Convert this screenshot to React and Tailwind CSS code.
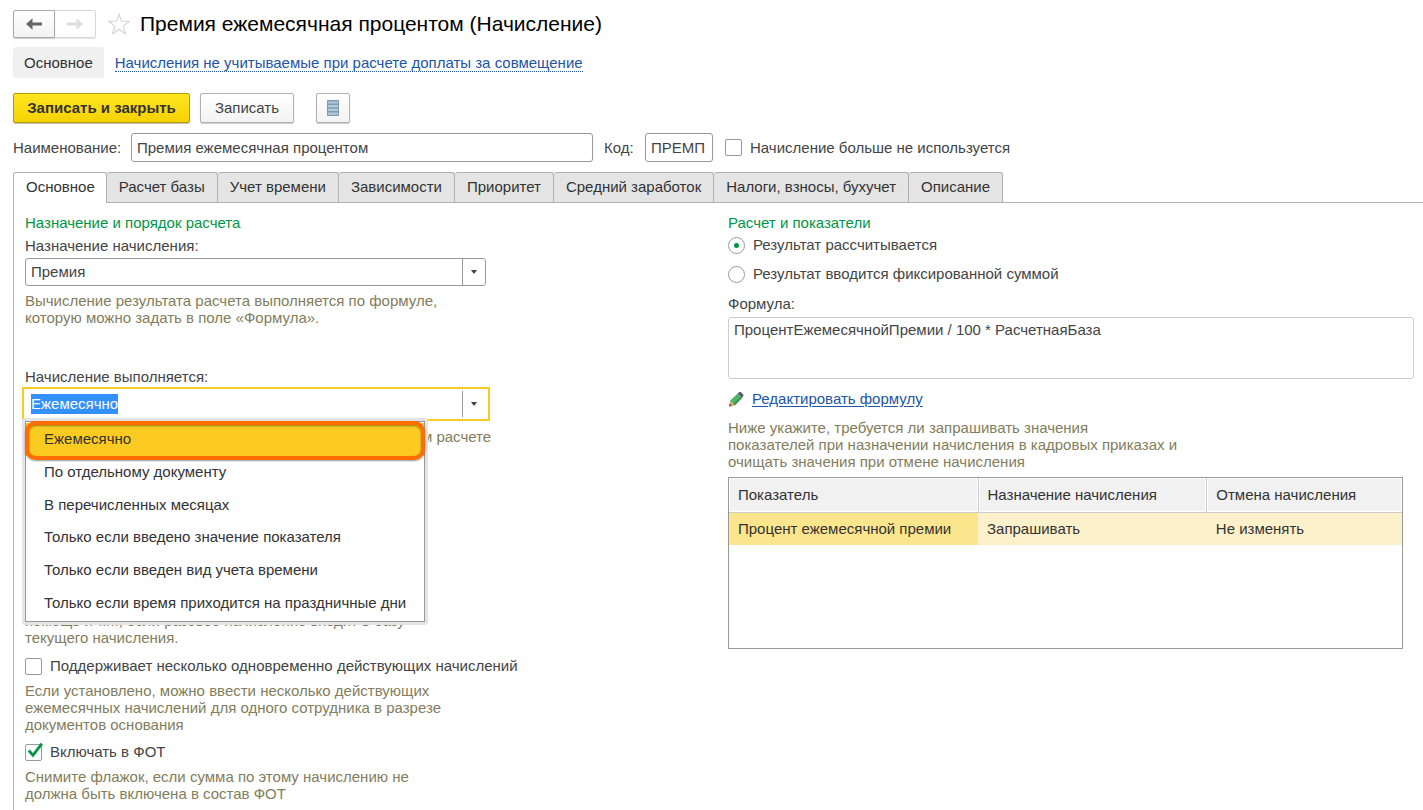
import { useEffect, useRef } from "react";

const TABS = [
  "Основное",
  "Расчет базы",
  "Учет времени",
  "Зависимости",
  "Приоритет",
  "Средний заработок",
  "Налоги, взносы, бухучет",
  "Описание",
];

const PERIODS = [
  "Ежемесячно",
  "По отдельному документу",
  "В перечисленных месяцах",
  "Только если введено значение показателя",
  "Только если введен вид учета времени",
  "Только если время приходится на праздничные дни",
];

function Caret() {
  return (
    <svg viewBox="0 0 6 4" className="h-1 w-1.5" aria-hidden="true">
      <path d="M0 0h6L3.5 3.5h-1z" fill="#444" />
    </svg>
  );
}

function Arrow({ flip }) {
  return (
    <svg viewBox="0 0 16 12" className={flip ? "h-3 w-4 -scale-x-100" : "h-3 w-4"} aria-hidden="true">
      <path d="M0 6 6.500 0.300V4.500H16V7.500H6.500V11.700Z" fill="currentColor" />
    </svg>
  );
}

function Star() {
  return (
    <svg viewBox="0 0 22 22" className="h-[22px] w-[22px]" aria-hidden="true">
      <path
        d="M11 1.200 13.500 8.200 21.400 8.500 15.200 13.200 17.400 20.800 11 16.400 4.600 20.800 6.800 13.200 .600 8.500 8.500 8.200Z"
        fill="#fff"
        stroke="#d9d9d9"
        strokeWidth="1.300"
      />
    </svg>
  );
}

function ListIcon() {
  return (
    <svg viewBox="0 0 12 16" className="h-4 w-3" aria-hidden="true">
      <rect x="0" y="0" width="12" height="16" rx="1" fill="#7d9bb3" />
      <path d="M1 2.500h10M1 6.200h10M1 9.900h10M1 13.600h10" stroke="#b3cadb" strokeWidth="2.200" />
    </svg>
  );
}

function Pencil() {
  return (
    <svg viewBox="0 0 16 16" className="h-4 w-4" aria-hidden="true">
      <path d="M1 15.500 2 9.800 6.800 14.200Z" fill="#e0a256" />
      <path d="M1 15.500 1.500 12.600 4 14.900Z" fill="#6b5a48" />
      <path d="M2 9.800 9.600 2.600 14 7 6.800 14.200Z" fill="#4fb563" />
      <path d="M5.600 13.100 12.800 5.800 14 7 6.800 14.200Z" fill="#35914a" />
      <path d="M9.600 2.600 11.400 1Q12.200 .500 13 1.200L15.200 3.400Q15.800 4.200 15.200 5L14 7Z" fill="#4f5d73" />
    </svg>
  );
}

function Check({ id, label, checked }) {
  return (
    <div className="flex h-5 items-center gap-2">
      <span className="relative flex">
        <input
          id={id}
          type="checkbox"
          defaultChecked={checked}
          className="peer h-[17px] w-[17px] appearance-none rounded-[2px] border border-[#999] bg-white"
        />
        <svg
          viewBox="0 0 17 17"
          className="pointer-events-none absolute inset-0 hidden h-[17px] w-[17px] overflow-visible peer-checked:block"
          aria-hidden="true"
        >
          <path d="M3.800 6.500 8 11.300 16.800 -.300" fill="none" stroke="#009646" strokeWidth="2.800" />
        </svg>
      </span>
      <label htmlFor={id} className="whitespace-nowrap">{label}</label>
    </div>
  );
}

function Radio({ id, label, checked }) {
  return (
    <div className="flex h-5 items-center gap-2">
      <span className="relative flex items-center justify-center">
        <input
          id={id}
          name="result"
          type="radio"
          defaultChecked={checked}
          className="peer h-[17px] w-[17px] appearance-none rounded-full border border-[#999] bg-white"
        />
        <span className="pointer-events-none absolute hidden h-[5px] w-[5px] rounded-full bg-[#009646] peer-checked:block" />
      </span>
      <label htmlFor={id}>{label}</label>
    </div>
  );
}

function Hint({ lines, className }) {
  return (
    <p className={"leading-[17px] whitespace-nowrap text-[#827d5c] " + className}>
      {lines.map((line) => (
        <span key={line} className="block">{line}</span>
      ))}
    </p>
  );
}

function PeriodField() {
  const input = useRef(null);
  useEffect(() => {
    input.current.focus({ preventScroll: true });
    input.current.select();
  }, []);
  return (
    <div className="relative -ml-[3px] w-[468px]">
      <div className="flex h-[34px] items-stretch border-2 border-[#fbcb22] bg-white py-0.5">
        <input
          id="period"
          ref={input}
          role="combobox"
          aria-expanded="true"
          aria-controls="period-list"
          defaultValue="Ежемесячно"
          className="min-w-0 flex-1 border-r border-[#999] pl-[7px] text-[#444] outline-none selection:bg-[#3390ff] selection:text-white"
        />
        <button type="button" aria-label="Открыть список" className="flex w-[25px] items-center justify-center pr-1">
          <Caret />
        </button>
      </div>
      <div className="absolute top-[31px] left-0 z-10 w-[406px] rounded-[3px] bg-[#e4e4e4] p-[3px]">
        <ul id="period-list" role="listbox" className="relative flex h-[201px] flex-col border border-[#999] bg-white pt-px pb-0.5 text-[#333]">
          {PERIODS.map((item, i) => (
            <li
              key={item}
              role="option"
              aria-selected={i === 0}
              className={"flex flex-1 items-center pl-[18px] whitespace-nowrap " + (i === 0 ? "bg-[#fbcb22]" : "")}
            >
              {item}
            </li>
          ))}
          <li
            role="presentation"
            className="absolute -top-px -right-px -left-px h-[39px] rounded-[11px] border-4 border-[#ff6d00] shadow-[0_1px_2px_rgba(0,0,0,0.4),inset_0_1px_2px_rgba(0,0,0,0.4)]"
          />
        </ul>
      </div>
    </div>
  );
}

export default function App() {
  return (
    <div className="flex min-h-screen flex-col bg-white pt-[10px] pl-[13px] font-['Liberation_Sans',Arial,sans-serif] text-[15px] leading-5 text-[#444]">
      <header className="flex items-center">
        <div className="flex h-7">
          <button type="button" aria-label="Назад" className="flex w-[42px] items-center justify-center rounded-l-[2px] border border-[#aaa] bg-linear-to-b from-white to-[#f2f2f2] text-[#666] shadow-[0_1px_1px_rgba(0,0,0,0.2)]">
            <Arrow />
          </button>
          <button type="button" aria-label="Вперед" className="flex w-[41px] items-center justify-center rounded-r-[2px] border border-l-0 border-[#d6d6d6] text-[#dedede] shadow-[0_1px_1px_rgba(0,0,0,0.1)]">
            <Arrow flip />
          </button>
        </div>
        <button type="button" aria-label="В избранное" className="ml-3">
          <Star />
        </button>
        <h1 className="ml-[10px] text-[21px] leading-6 text-black">Премия ежемесячная процентом (Начисление)</h1>
      </header>

      <nav className="mt-[9px] flex items-center gap-[11px]">
        <a href="#main" className="flex h-[31px] items-center rounded-[3px] bg-[#f0f0f0] px-[11px] text-[#333]">Основное</a>
        <a href="#related" className="border-b border-dotted border-[#2255a4] leading-[17px] text-[#2255a4]">
          Начисления не учитываемые при расчете доплаты за совмещение
        </a>
      </nav>

      <div className="mt-[15px] flex h-[30px] gap-[10px]">
        <button type="button" className="w-[177px] rounded-[2px] border border-[#b39b00] bg-linear-to-b from-[#ffe61f] to-[#f7d100] font-bold text-[#333] shadow-[0_1px_1px_rgba(0,0,0,0.25)]">
          Записать и закрыть
        </button>
        <button type="button" className="w-[94px] rounded-[2px] border border-[#b0b0b0] bg-linear-to-b from-white to-[#f3f3f3] text-[#444] shadow-[0_1px_1px_rgba(0,0,0,0.2)]">
          Записать
        </button>
        <button type="button" aria-label="Список" className="ml-3 flex w-[34px] items-center justify-center rounded-[2px] border border-[#b0b0b0] bg-linear-to-b from-white to-[#f3f3f3] shadow-[0_1px_1px_rgba(0,0,0,0.2)]">
          <ListIcon />
        </button>
      </div>

      <div className="mt-[10px] flex items-center">
        <label htmlFor="name" className="w-[118px]">Наименование:</label>
        <input id="name" defaultValue="Премия ежемесячная процентом" className="h-[29px] w-[462px] rounded-[3px] border border-[#999] px-[5px]" />
        <label htmlFor="code" className="ml-[11px] w-[41px]">Код:</label>
        <input id="code" defaultValue="ПРЕМП" className="mr-3 h-[29px] w-[68px] rounded-[3px] border border-[#999] px-[5px]" />
        <Check id="unused" label="Начисление больше не используется" />
      </div>

      <div role="tablist" className="mt-[10px] flex h-[31px] border-b border-[#b0b0b0] text-[#333]">
        {TABS.map((tab, i) => (
          <button
            key={tab}
            type="button"
            role="tab"
            aria-selected={i === 0}
            className={
              "rounded-t-[3px] border-t border-r border-[#b0b0b0] pb-0.5 whitespace-nowrap " +
              (i === 0 ? "-mb-px border-l bg-white pr-[11px] pl-3" : "bg-[#e4e4e4] px-3")
            }
          >
            {tab}
          </button>
        ))}
      </div>

      <main className="grid flex-1 grid-cols-[703fr_686fr] border-l border-[#b0b0b0] pt-[10px] pr-[9px] pb-2 pl-[11px]">
        <section>
          <h2 className="text-[#009646]">Назначение и порядок расчета</h2>
          <label htmlFor="purpose" className="mt-[3px] block">Назначение начисления:</label>
          <div className="relative mt-0.5 w-[461px]">
            <select id="purpose" className="h-7 w-full appearance-none rounded-[3px] border border-[#999] bg-white pr-7 pl-[5px]">
              <option>Премия</option>
            </select>
            <span className="pointer-events-none absolute inset-y-0 right-0 flex w-6 items-center justify-center border-l border-[#999] pr-0.5">
              <Caret />
            </span>
          </div>
          <Hint
            className="mt-[6px]"
            lines={["Вычисление результата расчета выполняется по формуле,", "которую можно задать в поле «Формула»."]}
          />
          <label htmlFor="period" className="mt-[41px] block">Начисление выполняется:</label>
          <PeriodField />
          <Hint className="mt-[7px]" lines={["Начисление выполняется ежемесячно при окончательном расчете"]} />
          <Hint lines={["помощь и т.п., если разовое начисление входит в базу", "текущего начисления."]} className="mt-[167px] mb-[10px]" />
          <Check id="multiple" label="Поддерживает несколько одновременно действующих начислений" />
          <Hint
            className="mt-[6px] mb-[9px]"
            lines={[
              "Если установлено, можно ввести несколько действующих",
              "ежемесячных начислений для одного сотрудника в разрезе",
              "документов основания",
            ]}
          />
          <Check id="fot" label="Включать в ФОТ" checked />
          <Hint
            className="mt-[6px]"
            lines={["Снимите флажок, если сумма по этому начислению не", "должна быть включена в состав ФОТ"]}
          />
        </section>

        <section>
          <h2 className="text-[#009646]">Расчет и показатели</h2>
          <div className="mt-0.5 flex flex-col gap-[9px]">
            <Radio id="calculated" label="Результат рассчитывается" checked />
            <Radio id="fixed" label="Результат вводится фиксированной суммой" />
          </div>
          <label htmlFor="formula" className="mt-[10px] block">Формула:</label>
          <textarea
            id="formula"
            defaultValue="ПроцентЕжемесячнойПремии / 100 * РасчетнаяБаза"
            className="mt-[3px] block h-[62px] w-full resize-none rounded-[3px] border border-[#ccc] px-[5px] py-0.5"
          />
          <div className="mt-[10px] flex items-center gap-2">
            <Pencil />
            <a href="#formula" className="text-[#2255a4] underline underline-offset-2">Редактировать формулу</a>
          </div>
          <Hint
            className="mt-[10px]"
            lines={[
              "Ниже укажите, требуется ли запрашивать значения",
              "показателей при назначении начисления в кадровых приказах и",
              "очищать значения при отмене начисления",
            ]}
          />
          <div className="mt-[7px] mr-[11px] h-[172px] border border-[#999]">
            <table className="w-full table-fixed border-collapse text-left text-[#333]">
              <colgroup>
                <col className="w-[37%]" />
                <col className="w-[34%]" />
                <col />
              </colgroup>
              <thead>
                <tr className="h-[34px] border-b border-[#ccc] bg-[#f1f1f1]">
                  <th className="border-r border-[#ccc] pl-[9px] font-normal shadow-[inset_0_0_0_1px_#fff]">Показатель</th>
                  <th className="border-r border-[#ccc] pl-[9px] font-normal shadow-[inset_0_0_0_1px_#fff]">Назначение начисления</th>
                  <th className="pl-[9px] font-normal shadow-[inset_0_0_0_1px_#fff]">Отмена начисления</th>
                </tr>
              </thead>
              <tbody>
                <tr className="h-[33px] bg-[#fdf1cb]">
                  <td className="bg-[#fbe58d] pl-[9px]">Процент ежемесячной премии</td>
                  <td className="pl-[9px]">Запрашивать</td>
                  <td className="pl-[9px]">Не изменять</td>
                </tr>
              </tbody>
            </table>
          </div>
        </section>
      </main>
    </div>
  );
}
